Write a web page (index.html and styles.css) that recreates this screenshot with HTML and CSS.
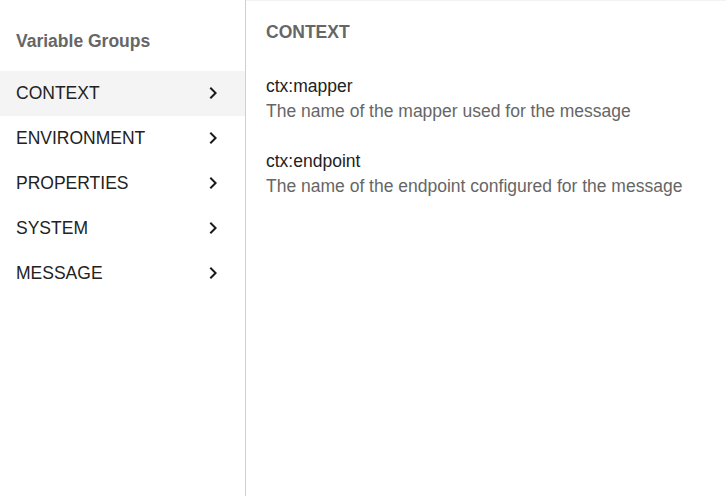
FILE: index.html
```html
<!DOCTYPE html>
<html>
<head>
<meta charset="utf-8">
<link rel="stylesheet" href="styles.css">
</head>
<body>
<div class="layout">
  <aside class="sidebar">
    <h2 class="sidebar-title">Variable Groups</h2>
    <ul class="groups">
      <li class="group active"><span>CONTEXT</span><svg class="chev" viewBox="0 0 24 24"><path d="M10 6L8.59 7.41 13.17 12l-4.58 4.59L10 18l6-6z"/></svg></li>
      <li class="group"><span>ENVIRONMENT</span><svg class="chev" viewBox="0 0 24 24"><path d="M10 6L8.59 7.41 13.17 12l-4.58 4.59L10 18l6-6z"/></svg></li>
      <li class="group"><span>PROPERTIES</span><svg class="chev" viewBox="0 0 24 24"><path d="M10 6L8.59 7.41 13.17 12l-4.58 4.59L10 18l6-6z"/></svg></li>
      <li class="group"><span>SYSTEM</span><svg class="chev" viewBox="0 0 24 24"><path d="M10 6L8.59 7.41 13.17 12l-4.58 4.59L10 18l6-6z"/></svg></li>
      <li class="group"><span>MESSAGE</span><svg class="chev" viewBox="0 0 24 24"><path d="M10 6L8.59 7.41 13.17 12l-4.58 4.59L10 18l6-6z"/></svg></li>
    </ul>
  </aside>
  <main class="content">
    <h2 class="content-title">CONTEXT</h2>
    <div class="vars">
      <div class="var">
        <div class="var-name">ctx:mapper</div>
        <div class="var-desc">The name of the mapper used for the message</div>
      </div>
      <div class="var">
        <div class="var-name">ctx:endpoint</div>
        <div class="var-desc">The name of the endpoint configured for the message</div>
      </div>
    </div>
  </main>
</div>
</body>
</html>
```
FILE: styles.css
```css
* { box-sizing: border-box; }
html, body { margin: 0; padding: 0; background: #fff; }
body {
  font-family: "Liberation Sans", Arial, sans-serif;
  font-size: 17.5px;
  color: #222;
}
.layout {
  display: flex;
  height: 496px;
}
.sidebar {
  width: 246px;
  flex: none;
  border-right: 1px solid #cfcfcf;
}
.sidebar-title {
  margin: 0;
  padding: 31px 16px 0;
  height: 71px;
  font-size: 17.5px;
  font-weight: bold;
  line-height: 20px;
  color: #666;
}
.groups { list-style: none; margin: 0; padding: 0; }
.group {
  display: flex;
  align-items: center;
  justify-content: space-between;
  height: 45px;
  padding: 0 20px 1px 16px;
  line-height: 20px;
  color: #222;
}
.group.active { background: #f4f4f4; }
.chev { width: 24px; height: 24px; fill: #1a1a1a; display: block; }
.content {
  flex: 1;
  border-top: 1px solid #f2f2f2;
  padding: 0 20px;
}
.content-title {
  margin: 0;
  padding-top: 21px;
  font-size: 17.5px;
  font-weight: bold;
  line-height: 20px;
  color: #666;
}
.vars {
  display: flex;
  flex-direction: column;
  gap: 25px;
  margin-top: 32px;
}
.var-name, .var-desc { line-height: 25px; }
.var-name { color: #222; }
.var-desc { color: #666; }
```
